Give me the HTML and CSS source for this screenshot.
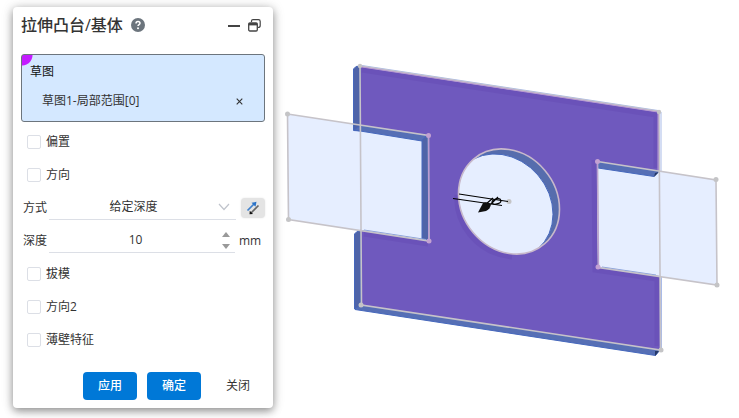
FILE: index.html
```html
<!DOCTYPE html>
<html lang="zh-CN">
<head>
  <meta charset="UTF-8">
  <title>拉伸凸台/基体</title>
  <meta name="viewport" content="width=device-width, initial-scale=1.0">
  <link rel="stylesheet" href="styles.css">
</head>
<body>

<form class="panel">
  <header class="panel-header">
    <h1>拉伸凸台/基体</h1>
    <button type="button" class="icon-btn help" aria-label="帮助">
      <svg width="14" height="14" viewBox="0 0 14 14">
        <circle cx="7" cy="7" r="7" fill="#6c757d"/>
        <path d="M5 5.4C5 4.2 5.9 3.5 7 3.5S9 4.2 9 5.3C9 6.7 7 6.6 7 8.1" fill="none" stroke="#fff" stroke-width="1.5"/>
        <circle cx="7" cy="10.3" r="1" fill="#fff"/>
      </svg>
    </button>
    <span class="spacer"></span>
    <button type="button" class="icon-btn" aria-label="最小化">
      <svg width="12" height="12" viewBox="0 0 12 12"><path d="M0 7H12" stroke="#444" stroke-width="2"/></svg>
    </button>
    <button type="button" class="icon-btn" aria-label="还原">
      <svg width="13" height="13" viewBox="0 0 13 13" fill="none" stroke="#444">
        <path d="M3.5 3V2Q3.5 .7 5 .7H10.5Q12.2 .7 12.2 2.4V6.5Q12.2 8.5 10 8.5" stroke-width="1.2"/>
        <rect x=".7" y="4" width="8.6" height="8" rx="1.2" stroke-width="1.3"/>
        <path d="M.7 5.2H9.3" stroke-width="2.4"/>
      </svg>
    </button>
  </header>

  <section class="sketch-box">
    <h2>草图</h2>
    <div class="sketch-item">
      <span>草图1-局部范围[0]</span>
      <button type="button" class="icon-btn" aria-label="移除">
        <svg width="7" height="7" viewBox="0 0 7 7"><path d="M.7 .7L6.3 6.3M6.3 .7L.7 6.3" stroke="#333" stroke-width="1.1"/></svg>
      </button>
    </div>
  </section>

  <div class="rows">
    <label class="row check"><input type="checkbox">偏置</label>
    <label class="row check"><input type="checkbox">方向</label>
    <div class="row">
      <label for="mode">方式</label>
      <div class="field">
        <select id="mode"><option>给定深度</option></select>
        <svg class="chevron" width="12" height="8" viewBox="0 0 12 8"><path d="M1 1L6 6.5L11 1" fill="none" stroke="#c0c4cc" stroke-width="1.2"/></svg>
      </div>
      <button type="button" class="flip-btn" aria-label="反向">
        <svg width="14" height="14" viewBox="0 0 14 14">
          <path d="M1.500 9.500L8 3" stroke="#3f80cc" stroke-width="1.7"/>
          <path d="M5.500 1.800L10.500 .800L9.500 5.800Z" fill="#2b73c8"/>
          <path d="M5 12L12.500 4.500" stroke="#666" stroke-width="1.7"/>
          <path d="M3.800 9.800L7 13L3.500 13.300Z" fill="#111"/>
        </svg>
      </button>
    </div>
    <div class="row">
      <label for="depth">深度</label>
      <div class="field">
        <input type="text" id="depth" value="10" inputmode="decimal">
        <div class="stepper">
          <button type="button" class="icon-btn" aria-label="增加"><svg width="8" height="5" viewBox="0 0 8 5"><path d="M0 5L4 0L8 5Z" fill="#999"/></svg></button>
          <button type="button" class="icon-btn" aria-label="减少"><svg width="8" height="5" viewBox="0 0 8 5"><path d="M0 0L4 5L8 0Z" fill="#999"/></svg></button>
        </div>
      </div>
      <span class="unit">mm</span>
    </div>
    <label class="row check"><input type="checkbox">拔模</label>
    <label class="row check"><input type="checkbox">方向2</label>
    <label class="row check"><input type="checkbox">薄壁特征</label>
  </div>

  <footer class="actions">
    <button type="button" class="btn primary">应用</button>
    <button type="button" class="btn primary">确定</button>
    <button type="button" class="btn">关闭</button>
  </footer>
</form>

<main class="viewport">
  <svg class="model" viewBox="273 0 466 418" preserveAspectRatio="xMinYMin meet">
    <!-- sketch regions -->
    <path d="M287 114L428 135L429 241L288 219Z" fill="#e6eeff"/>
    <path d="M597 161L716 180L717 285L598 267Z" fill="#e6eeff"/>

    <!-- side walls -->
    <g fill="#4f64a8" stroke="#4668bd" stroke-width="1">
      <path d="M361 66L356 66.500L353.500 69V130.500L361 131Z"/>
      <path d="M354 130L361 125L428 135L422 141Z" fill="#566fb5"/>
      <path d="M428 135L422 140V239L429 240Z"/>
      <path d="M361 230L357 231.500L354.500 234V309L361 306Z"/>
      <path d="M355 309.500L361 304L660 350L655.500 355.500Z" fill="#566fb5"/>
      <path d="M598 161L659 171L654 176.500L598 168Z" fill="#566fb5"/>
    </g>
    <path d="M655 173L659 172L654 177Z M655 351L659 351L655 356Z" fill="#263968"/>

    <!-- front face -->
    <path d="M361 66L659 111V171L597 161L598 267L660 276V350L361 305V230L429 241L428 135L361 125Z" fill="#6f59be"/>
    <g fill="none" stroke="#5f43ae" stroke-width="5" opacity=".3">
      <path d="M362 70L656 115V168"/>
      <path d="M594 160L595 270L657 279V346"/>
      <path d="M364 234L428 244"/>
      <path d="M457 195C455 222 475 253 512 257"/>
    </g>

    <!-- bore -->
    <clipPath id="bore"><circle r="1" transform="matrix(50.500 7.700 0 52 509 201.500)"/></clipPath>
    <g clip-path="url(#bore)">
      <path d="M450 140H570V265H450Z" fill="#566dad"/>
      <circle r="1" transform="matrix(51 7.700 0 52 502 206.500)" fill="#e6eeff" stroke="#4668bd" stroke-width="1" vector-effect="non-scaling-stroke"/>
    </g>

    <!-- sketch lines -->
    <path d="M362 65.500L658 110.500M661 112V171M661.500 277V350" stroke="#a9bbe8" stroke-width="1" fill="none"/>
    <path d="M364 230L426 239.500M602 267L656 275" stroke="#86a0dc" stroke-width="1"/>
    <g fill="none" stroke="#c6c3c9" stroke-width="1.600">
      <path d="M360 66L659 111.500L660.500 350L361.500 305Z"/>
      <path d="M287.500 114L428.500 135.500L429 241L288.500 219.500Z"/>
      <path d="M597.500 161.500L716 180L717 285L598.500 267.500Z"/>
      <circle r="1" transform="matrix(50.500 7.700 0 52 509 201.500)" vector-effect="non-scaling-stroke" stroke="#c8b9cb"/>
    </g>
    <g fill="none" stroke="#b99bd2" stroke-width="1">
      <path d="M362 67L658 112V170M428.500 136V241"/>
      <path d="M597.500 161.500L598.500 267.500"/>
    </g>
    <g fill="#c4c4c6">
      <circle cx="360" cy="66" r="2.200"/><circle cx="659" cy="112" r="2.200"/>
      <circle cx="661" cy="350" r="2.500"/><circle cx="361" cy="305" r="2.500"/>
      <circle cx="287.500" cy="114" r="2.500"/><circle cx="288.500" cy="219.500" r="2.500"/>
      <circle cx="716" cy="179.500" r="2.500"/><circle cx="717" cy="285" r="2.500"/>
      <circle cx="509" cy="201.500" r="2.500"/>
    </g>
    <g fill="#c3a1d2">
      <circle cx="428.500" cy="135.500" r="2.500"/><circle cx="429" cy="241" r="2.500"/>
      <circle cx="597.500" cy="161.500" r="2.500"/><circle cx="598" cy="267" r="2.500"/>
    </g>

    <!-- direction handle -->
    <g fill="none" stroke="#000" stroke-width="1.200">
      <path d="M459 194L508 201.500M453 198.500L502 205.500"/>
      <path d="M486 204L493 198M491 204L498 197"/>
      <ellipse cx="496.500" cy="201.500" rx="4.500" ry="2.500" transform="rotate(-15 496.500 201.500)"/>
    </g>
    <path d="M478 212.500L483 203Q486 201 491 204Q490.500 209 486 211Z" fill="#111"/>
  </svg>
</main>

</body>
</html>
```
FILE: styles.css
```css
* {
  box-sizing: border-box;
}
body {
  margin: 0;
  min-height: 100vh;
  display: flex;
  align-items: flex-start;
  background: #fff;
  color: #333;
  font-family: "Open Sans", "Noto Sans CJK SC", sans-serif;
  font-size: 12px;
  line-height: 18px;
}
button, input, select {
  font: inherit;
  color: inherit;
}
button {
  cursor: pointer;
}
.panel {
  position: relative;
  z-index: 1;
  flex: 0 0 260px;
  margin: 7px 0 10px 13px;
  padding: 0 8px 8px;
  background: #fff;
  border-radius: 4px;
  box-shadow: 0 3px 8px rgba(0,0,0,0.4), 0 0 14px rgba(0,0,0,0.12);
}
.panel-header {
  display: flex;
  align-items: center;
  gap: 8px;
  height: 36px;
  margin-bottom: 11px;
  padding-right: 4px;
}
.panel-header h1 {
  margin: 0;
  font-size: 16px;
  font-weight: 500;
  line-height: 24px;
}
.spacer {
  flex: 1;
}
.icon-btn {
  display: flex;
  padding: 0;
  border: none;
  background: none;
}
.sketch-box {
  height: 68px;
  padding: 8px;
  border: 1px solid #6c757d;
  border-radius: 3px;
  background: radial-gradient(circle at 0 0, #c41bff 10px, #d4e8ff 11px);
}
.sketch-box h2 {
  margin: 0 0 11px;
  font-size: 12px;
  font-weight: 400;
  line-height: 18px;
  color: #111;
}
.sketch-item {
  display: flex;
  align-items: center;
  justify-content: space-between;
  padding: 0 13px 0 12px;
}
.rows {
  margin-top: 3px;
}
.row {
  display: flex;
  align-items: center;
  height: 33px;
  padding-left: 2px;
}
.check {
  gap: 5px;
  padding-left: 6px;
}
.check input {
  appearance: none;
  width: 14px;
  height: 14px;
  margin: 0;
  border: 1px solid #dcdfe6;
  border-radius: 2px;
  background: #fff;
}
.check input:checked {
  background: #0078d7;
}
.field {
  flex: 1;
  display: flex;
  align-items: center;
  height: 24px;
  margin-left: 2px;
  border-bottom: 1px solid #dcdfe6;
}
.field select, .field input {
  flex: 1;
  min-width: 0;
  padding: 0;
  border: none;
  outline: none;
  background: none;
  text-align: center;
}
.field select {
  appearance: none;
  text-align-last: center;
}
.chevron {
  margin-right: 6px;
}
.stepper {
  display: flex;
  flex-direction: column;
  gap: 7px;
  margin-right: 5px;
}
.flip-btn {
  display: flex;
  align-items: center;
  justify-content: center;
  width: 24px;
  height: 20px;
  margin-left: 5px;
  padding: 0;
  border: none;
  border-radius: 4px;
  background: #e4e4e4;
  box-shadow: 0 0 2px #e4e4e4;
}
.unit {
  width: 26px;
  margin-left: 4px;
}
.actions {
  display: flex;
  justify-content: flex-end;
  gap: 10px;
  margin-top: 16px;
}
.btn {
  width: 54px;
  height: 28px;
  padding: 0;
  border: none;
  border-radius: 4px;
  background: #fff;
}
.btn.primary {
  background: #0078d7;
  color: #fff;
  font-weight: 500;
}
.btn.primary:hover {
  background: #006abe;
}
.viewport {
  flex: 1;
  min-width: 0;
}
.model {
  display: block;
  width: 100%;
}
```
